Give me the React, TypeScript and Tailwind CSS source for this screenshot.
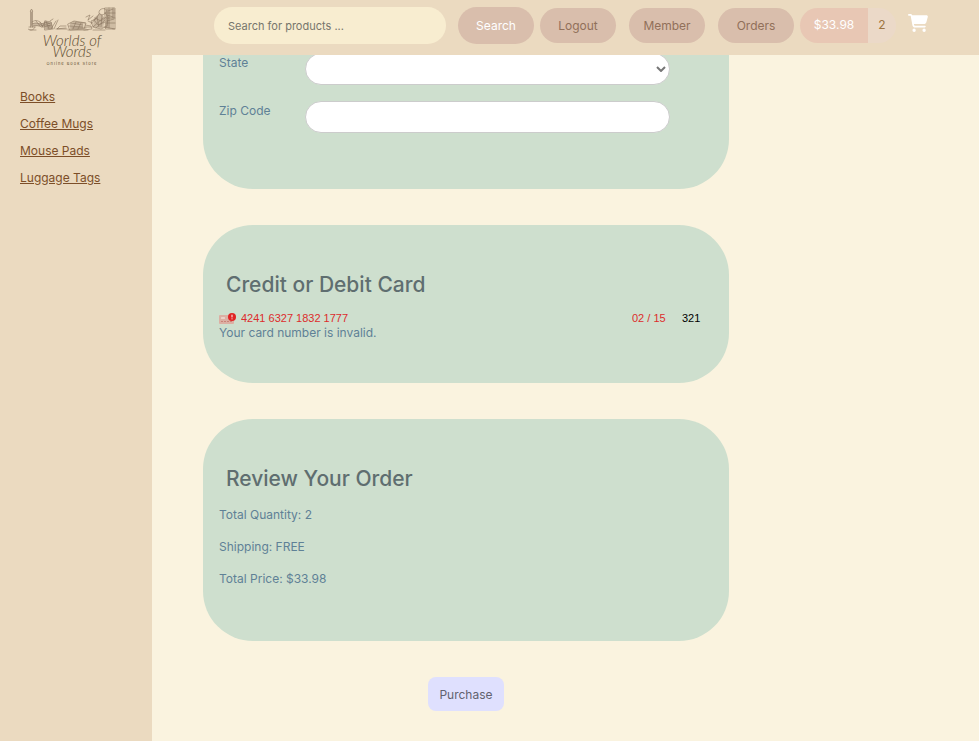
import React from "react";
import { FaCartShopping } from "react-icons/fa6";

const categories = ["Books", "Coffee Mugs", "Mouse Pads", "Luggage Tags"];

const summary = [
  { label: "Total Quantity", value: "2" },
  { label: "Shipping", value: "FREE" },
  { label: "Total Price", value: "$33.98" },
];

function Logo() {
  return (
    <a href="#home" className="block w-22 text-[#8a7660]" aria-label="Worlds of Words home">
      <svg viewBox="0 0 88 24" className="block w-full" fill="none" stroke="currentColor" strokeWidth="0.6" strokeLinecap="round" strokeLinejoin="round" aria-hidden="true">
        {/* candle and its holder */}
        <path d="M2.5 4v16M4.5 4v16M2.5 4l1-2 1 2M1 20h6M0 22c3 2 6 1 7-2M3.5 5v14" />
        {/* open book and fallen leaves */}
        <path d="M4 15c4-3 7-1 10 2 3-2 6-2 8 0M4 17c4-2 7-1 10 2 3-2 6-1 8 0M5 19c4-1 6 0 9 1l8-1M8 14l4 5M12 15l3 5M17 15l-3 5" />
        <path d="M17 14l6 1 2 7-8 1zM18 16l5 1M18 18l6 1M19 21l5 0M22 14l3-2M23 22l5-8M26 22l4-9M28 22l10-1M21 22l-3-8M38 19h-6l-3 3h10" />
        {/* stacked books */}
        <path d="M40 17l6-3 12 2-2 6-14 1zM41 19l14 1M43 16l12 2M45 15l12 1M44 21l14 0M48 15l-3 7M53 16l-3 6M57 18l6 1 1 3-8 1M57 20h6" />
        {/* seated reader */}
        <path d="M72 3c3-3 7-1 6 2s-6 4-7 1c0-1 0-2 1-3M71 7l-3 5-5 2 2 6 8 2 6-3 1-9-3-4M67 11l6 3 5-4M66 13l4 5 7-3M69 10l2 10M74 8l-1 12M63 17l5-6M60 14l4 2M65 20l10-9M68 21l9-8M58 10l4-2-2 5 5-4" />
        {/* bookcase */}
        <path d="M77 1h10v21h-9zM79 2v18M81 1v20M83 2v19M85 1v21M77 6h10M78 11h9M78 16h9M79 8l6 2M79 14l7-2M76 20l11 2M80 4l5-2M2 23h6M40 23h20M65 23h12" />
        <g fill="currentColor" stroke="none" fillOpacity="0.35">
          <path d="M66 11l6-5 5 5-2 10-10-1z" />
          <path d="M78 2h4v19h-4zM84 2h3v9h-3zM17 15h7v7h-7zM42 16h13v6H42z" />
          <path d="M5 16h12v3H5z" />
        </g>
      </svg>
      <span className="mt-1 block text-center font-['Lato',cursive] text-[15px] leading-[11px] font-light text-[#5f4e32] italic">
        Worlds of
        <br />
        Words
      </span>
      <span className="mt-1 block text-center text-[4px] leading-[6px] tracking-[1px] whitespace-nowrap text-[#5f4e32]">Online Book Store</span>
    </a>
  );
}

function InvalidCardIcon() {
  return (
    <svg viewBox="0 0 17 12" className="h-3 w-[17px] shrink-0" aria-hidden="true">
      <rect x="0" y="2" width="15" height="9" rx="1" fill="#dcafa3" />
      <rect x="2" y="4" width="4" height="2" rx="0.5" fill="#ead2c8" />
      <path d="M2 8.5h11" stroke="#c98378" strokeWidth="1" strokeDasharray="2 1" />
      <circle cx="13" cy="4" r="4" fill="#e02424" />
      <path d="M13 1.7v2.7M13 5.4v.9" stroke="#fff" strokeWidth="1" />
    </svg>
  );
}

const navButton = "h-[35px] w-19 rounded-full bg-[#d9beac] pt-px text-[#91705a]";
const card = "w-[526px] max-w-full rounded-[50px] bg-[#cedfce] px-4";
const heading = "pl-[7px] text-[21px] leading-8 font-medium text-[#5f6e70]";
const field = "h-8 w-[365px] rounded-full border border-[#cccccc] bg-white px-3";

export default function App() {
  return (
    <div className="flex min-h-screen bg-[#faf3df] font-[Inter,sans-serif] text-[12px] text-[#5f8196]">
      <aside className="w-38 shrink-0 bg-[#ebdac0]">
        <div className="h-[67px] pt-[7px] pl-7">
          <Logo />
        </div>
        <nav aria-label="Categories" className="mt-5 pl-5">
          <ul className="flex flex-col gap-2">
            {categories.map((name) => (
              <li key={name} className="leading-[19px]">
                <a href="#category" className="text-[#7c4e28] underline">{name}</a>
              </li>
            ))}
          </ul>
        </nav>
      </aside>

      <div className="flex min-w-0 flex-1 flex-col">
        <header className="z-10 flex h-[55px] items-start bg-[#ebdac0] pt-[7px] pl-[62px]">
          <form className="flex gap-3" onSubmit={(e) => e.preventDefault()}>
            <input
              type="search"
              aria-label="Search for products"
              placeholder="Search for products ..."
              className="h-[37px] w-58 rounded-full bg-[#f8edd0] px-[14px] text-[11px] placeholder:text-[#77756c]"
            />
            <button className="h-[37px] w-19 rounded-full bg-[#d9beac] pt-px text-white">Search</button>
          </form>
          <div className="mt-px ml-[6px] flex gap-[13px]">
            <button className={navButton}>Logout</button>
            <button className={navButton}>Member</button>
            <button className={navButton}>Orders</button>
          </div>
          <a href="#cart" aria-label="Shopping cart" className="mt-px ml-[6px] flex">
            <span className="flex h-[35px] w-17 items-center justify-center rounded-l-full bg-[#e8c7b4] pb-0.5 text-white">$33.98</span>
            <span className="flex h-[35px] w-7 items-center justify-center rounded-r-full bg-[#ebd9c8] pb-0.5 text-[#9d7440]">2</span>
            <FaCartShopping className="mt-[6px] ml-3 h-[18px] w-5 text-white" />
          </a>
        </header>

        <main className="-mt-0.5 w-[577px] max-w-full pl-[51px]">
          <form className="flex flex-col gap-9" onSubmit={(e) => e.preventDefault()}>
            <section className="flex w-[526px] max-w-full flex-col gap-4 rounded-b-[50px] bg-[#cedfce] px-4 pb-14">
              <div className="flex">
                <label htmlFor="state" className="w-[86px] leading-5">State</label>
                <div className="relative">
                  <select id="state" className={`${field} appearance-none`} defaultValue="">
                    <option value=""></option>
                  </select>
                  <svg viewBox="0 0 10 6" className="pointer-events-none absolute top-[13px] right-1 h-[6px] w-[10px]" fill="none" stroke="#767676" strokeWidth="2" aria-hidden="true">
                    <path d="M1 1l4 4 4-4" />
                  </svg>
                </div>
              </div>
              <div className="flex">
                <label htmlFor="zip" className="w-[86px] leading-5">Zip Code</label>
                <input id="zip" type="text" className={field} />
              </div>
            </section>

            <section className={`${card} pt-11 pb-[42px]`}>
              <h3 className={heading}>Credit or Debit Card</h3>
              <div className="mt-2 flex h-4 items-end font-['Liberation_Sans',sans-serif] text-[11px] leading-[14px] text-[#dd2c2c]">
                <InvalidCardIcon />
                <input aria-label="Card number" defaultValue="4241 6327 1832 1777" className="ml-[5px] min-w-0 flex-1" />
                <input aria-label="Expiry date" defaultValue="02 / 15" className="w-[50px]" />
                <input aria-label="Security code" defaultValue="321" className="w-[31px] text-black" />
              </div>
              <p role="alert" className="leading-4">Your card number is invalid.</p>
            </section>

            <section className={`${card} pt-11 pb-[54px]`}>
              <h3 className={heading}>Review Your Order</h3>
              <div className="mt-3 flex flex-col gap-4 leading-4">
                {summary.map(({ label, value }) => (
                  <p key={label}>{`${label}: ${value}`}</p>
                ))}
              </div>
            </section>

            <button className="mb-[30px] h-[34px] w-19 self-center rounded-lg bg-[#dfe0fe] pt-px text-[#62626f]">Purchase</button>
          </form>
        </main>
      </div>
    </div>
  );
}
